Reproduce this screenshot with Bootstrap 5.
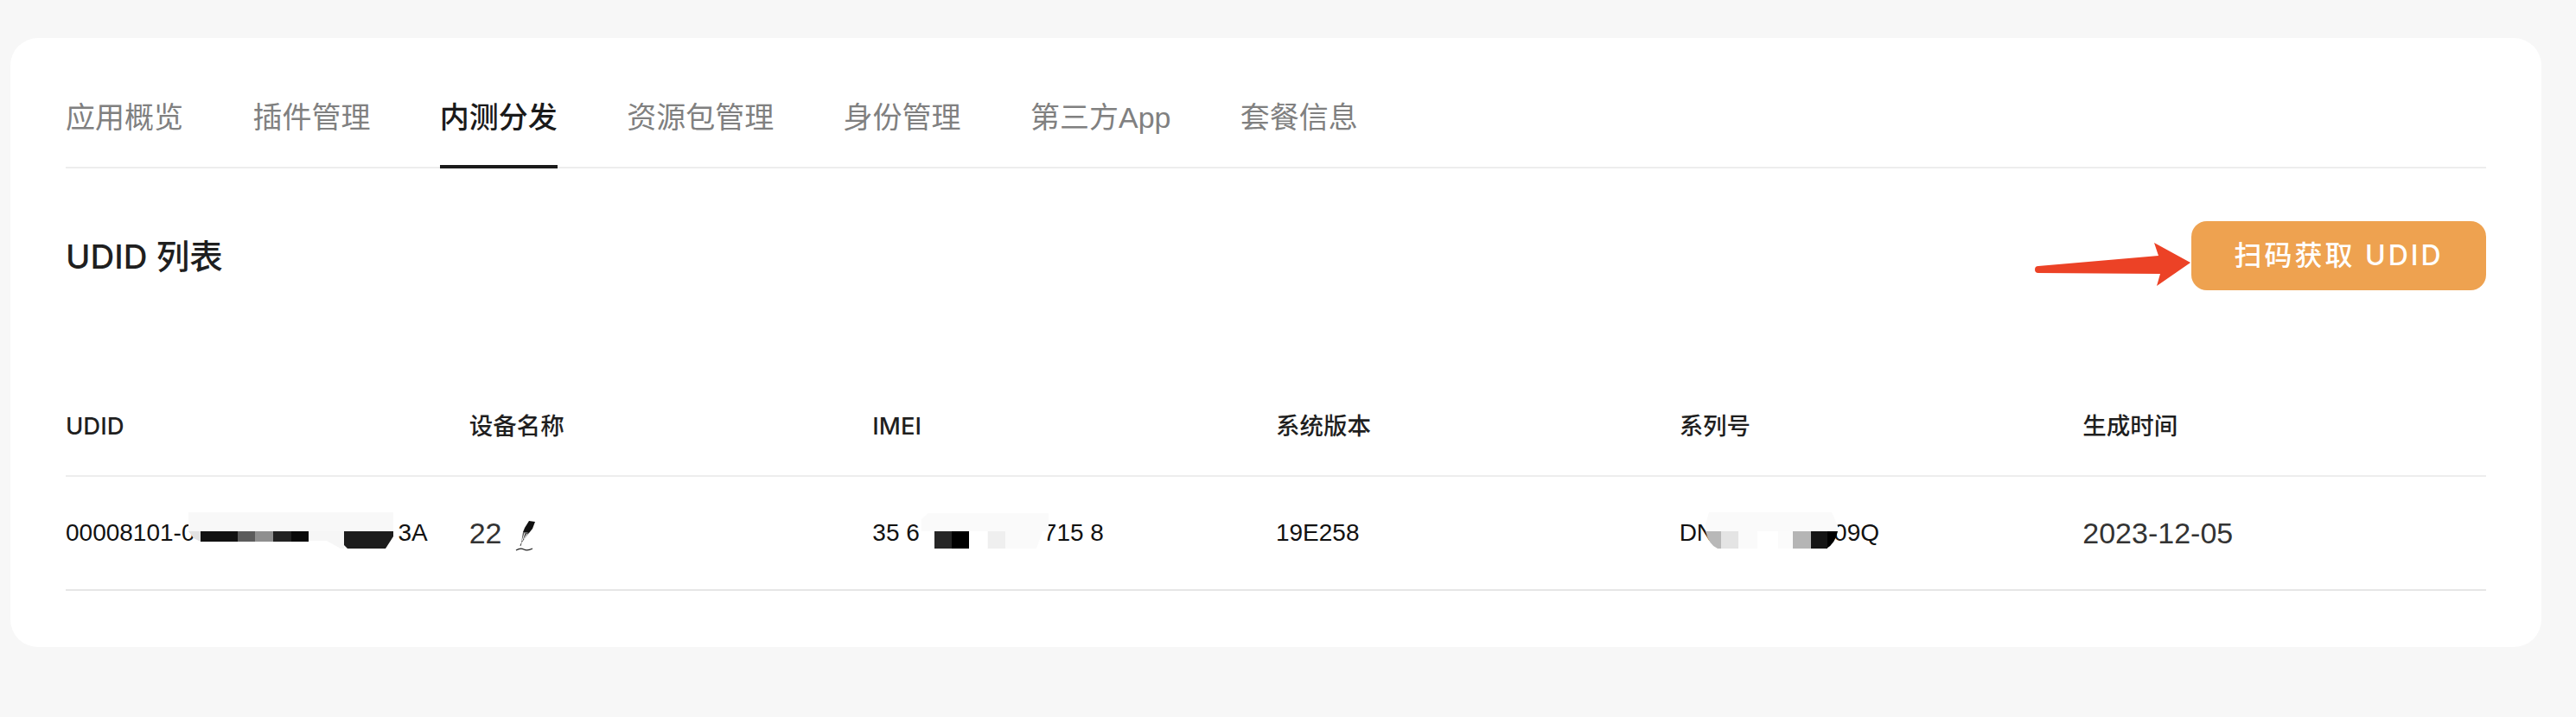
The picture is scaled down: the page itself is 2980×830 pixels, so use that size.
<!DOCTYPE html>
<html lang="zh">
  <head>
    <meta charset="UTF-8" />
    <meta name="viewport" content="width=device-width, initial-scale=1" />
    <title>UDID 列表</title>
    <link href="https://cdn.jsdelivr.net/npm/bootstrap@5.3.0/dist/css/bootstrap.min.css" rel="stylesheet" />
    <script src="https://cdn.jsdelivr.net/npm/bootstrap@5.3.0/dist/js/bootstrap.bundle.min.js"></script>
    <style>
      body {
        background-color: #f7f7f7;
        padding: 44px 40px 0 12px;
        font-family: "Liberation Sans", "Noto Sans CJK SC", sans-serif;
        color: #1c1c1c;
      }
      .panel {
        background-color: #fff;
        border-radius: 32px;
        padding: 56px 64px 65px 64px;
      }
      .tab-bar {
        border-bottom: 2px solid #ededed;
        gap: 80.4px;
        height: 95px;
      }
      .tab-bar .nav-link {
        color: #808080;
        font-size: 34px;
        line-height: 50px;
        padding: 11px 0 0;
        height: 95px;
      }
      .tab-bar .nav-link.active {
        color: #1a1a1a;
        font-weight: 500;
        border-bottom: 4px solid #1a1a1a;
      }
      .list-head {
        margin-top: 61px;
        height: 80px;
      }
      .list-title {
        font-family: Inter, "Noto Sans CJK SC", sans-serif;
        font-size: 38.5px;
        font-weight: 500;
        margin: 3px 0 0;
        color: #1f1f1f;
      }
      .scan-btn {
        background-color: #eea250;
        border: 0;
        border-radius: 18px;
        color: #fff;
        font-family: Inter, "Noto Sans CJK SC", sans-serif;
        font-size: 32px;
        font-weight: 500;
        letter-spacing: 3px;
        width: 341px;
        height: 80px;
        padding: 0;
      }
      .scan-btn:hover {
        background-color: #eea250;
        color: #fff;
      }
      .arrow-wrap {
        position: relative;
      }
      .red-arrow {
        position: absolute;
        left: -181px;
        top: 24px;
      }
      .udid-table {
        margin: 97px 0 0;
        table-layout: fixed;
        width: 2800px;
      }
      .udid-table th {
        font-family: Inter, "Noto Sans CJK SC", sans-serif;
        font-size: 27.5px;
        font-weight: 500;
        height: 118px;
        padding: 4px 0 0;
        vertical-align: middle;
        border-bottom: 2px solid #ededed;
        color: #1f1f1f;
      }
      .udid-table td {
        font-size: 28px;
        height: 132px;
        padding: 0;
        vertical-align: middle;
        border-bottom: 2px solid #e6e6e6;
        color: #111;
        white-space: nowrap;
      }
      .udid-table td.big-val {
        font-size: 34px;
        color: #333;
      }
      .mosaic {
        display: inline-block;
        position: relative;
        height: 1em;
        vertical-align: baseline;
      }
      .mosaic svg {
        position: absolute;
        left: 0;
        top: -5px;
      }
      .mosaic-udid {
        width: 237px;
        margin: 0 5px 0 -7px;
      }
      .mosaic-imei {
        width: 147px;
        margin: 0 -6px 0 2px;
      }
      .mosaic-serial {
        width: 156px;
        margin: 0 -8px 0 -10px;
      }
      .pen-icon {
        margin-left: 16px;
        vertical-align: -9px;
      }
    </style>
  </head>
  <body>
    <div class="panel">
      <ul class="nav tab-bar">
        <li class="nav-item"><a class="nav-link" href="#">应用概览</a></li>
        <li class="nav-item"><a class="nav-link" href="#">插件管理</a></li>
        <li class="nav-item"><a class="nav-link active" href="#">内测分发</a></li>
        <li class="nav-item"><a class="nav-link" href="#">资源包管理</a></li>
        <li class="nav-item"><a class="nav-link" href="#">身份管理</a></li>
        <li class="nav-item"><a class="nav-link" href="#">第三方App</a></li>
        <li class="nav-item"><a class="nav-link" href="#">套餐信息</a></li>
      </ul>

      <div class="list-head d-flex justify-content-between align-items-center">
        <h2 class="list-title">UDID 列表</h2>
        <div class="arrow-wrap">
          <svg class="red-arrow" width="180" height="54" viewBox="0 0 180 54">
            <path d="M4 28 L143 16 L138 1 L180 24 L141 51 L145 37 L4 36 Q0 36 0 32 Q0 28 4 28 Z" fill="#ec4226" />
          </svg>
          <button type="button" class="btn scan-btn">扫码获取 UDID</button>
        </div>
      </div>

      <table class="udid-table">
        <thead>
          <tr>
            <th>UDID</th>
            <th>设备名称</th>
            <th>IMEI</th>
            <th>系统版本</th>
            <th>系列号</th>
            <th>生成时间</th>
          </tr>
        </thead>
        <tbody>
          <tr>
            <td>00008101-0<span class="mosaic mosaic-udid"><svg width="237" height="42" viewBox="0 0 237 42">
                <path d="M0 0H237V22H0Z" fill="#f8f8f8" />
                <path d="M0 22H14V34L6 30Z" fill="#e2e2e2" />
                <rect x="14" y="22" width="43" height="12" fill="#111" />
                <rect x="57" y="22" width="20" height="12" fill="#5c5c5c" />
                <rect x="77" y="22" width="21" height="12" fill="#8f8f8f" />
                <rect x="98" y="22" width="21" height="12" fill="#222" />
                <rect x="119" y="22" width="20" height="12" fill="#0a0a0a" />
                <path d="M139 22H180V42H176L160 33H139Z" fill="#f6f6f6" />
                <path d="M180 22H237V28L228 42H184L180 38Z" fill="#1c1c1c" />
              </svg></span>3A</td>
            <td class="big-val">22<svg class="pen-icon" width="24" height="36" viewBox="0 0 24 36">
                <path d="M16 1L23 2L20 10L16 15L9 14L11 9Z" fill="#111" />
                <path d="M9 14L16 15L12 20L7 27L8 20Z" fill="#555" />
                <path d="M11 15L8 24M14 16L10 22" stroke="#eee" stroke-width="1" fill="none" />
                <path d="M7 27L6 30" stroke="#444" stroke-width="1" fill="none" />
                <path d="M1 35Q6 32 10 34T20 33" stroke="#222" stroke-width="1.2" fill="none" />
              </svg></td>
            <td>35 6<span class="mosaic mosaic-imei"><svg width="147" height="42" viewBox="0 0 147 42">
                <path d="M0 22V8L8 1H147V22H140L133 42H76V22Z" fill="#fafafa" />
                <rect x="15" y="22" width="20" height="20" fill="#262626" />
                <rect x="35" y="22" width="20" height="20" fill="#000" />
                <rect x="77" y="22" width="20" height="20" fill="#efefef" />
              </svg></span>715 8</td>
            <td>19E258</td>
            <td>DN<span class="mosaic mosaic-serial"><svg width="153" height="42" viewBox="0 0 153 42">
                <path d="M4 0H146L153 16V22H0V14Z" fill="#fafafa" />
                <path d="M0 22H18V42H14Q4 38 0 22Z" fill="#b8b8b8" />
                <rect x="18" y="22" width="20" height="20" fill="#e4e4e4" />
                <rect x="38" y="22" width="22" height="20" fill="#fafafa" />
                <rect x="84" y="22" width="17" height="20" fill="#fbfbfb" />
                <rect x="101" y="22" width="21" height="20" fill="#b5b5b5" />
                <rect x="122" y="22" width="19" height="20" fill="#151515" />
                <path d="M141 22H153Q150 36 140 42L141 42Z" fill="#000" />
              </svg></span>09Q</td>
            <td class="big-val">2023-12-05</td>
          </tr>
        </tbody>
      </table>
    </div>
  </body>
</html>
